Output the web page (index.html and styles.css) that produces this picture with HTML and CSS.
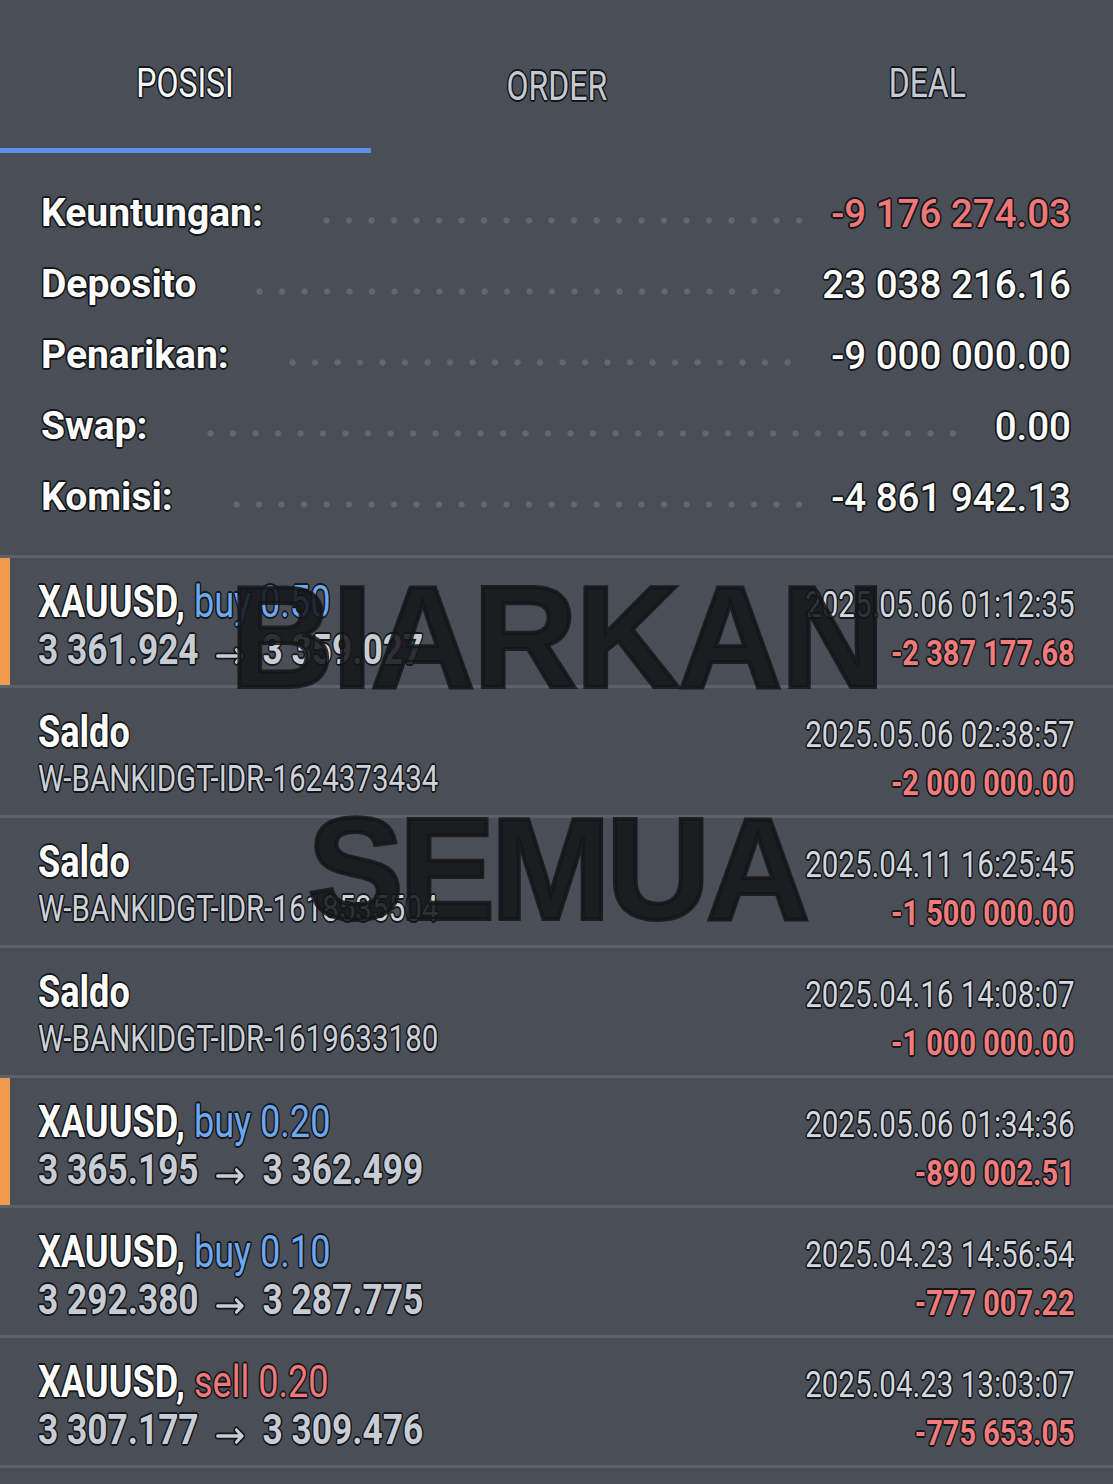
FILE: index.html
```html
<!DOCTYPE html>
<html lang="id">
<head>
<meta charset="utf-8">
<title>Riwayat</title>
<link rel="stylesheet" href="styles.css">
</head>
<body>
<div class="screen">
  <nav class="tabs">
    <div class="tab active"><span class="tab-label">POSISI</span></div>
    <div class="tab"><span class="tab-label order">ORDER</span></div>
    <div class="tab"><span class="tab-label">DEAL</span></div>
  </nav>

  <section class="summary">
    <div class="srow"><span class="label">Keuntungan:</span><span class="leader"></span><span class="val neg">-9 176 274.03</span></div>
    <div class="srow"><span class="label">Deposito</span><span class="leader"></span><span class="val">23 038 216.16</span></div>
    <div class="srow"><span class="label">Penarikan:</span><span class="leader"></span><span class="val">-9 000 000.00</span></div>
    <div class="srow"><span class="label">Swap:</span><span class="leader"></span><span class="val">0.00</span></div>
    <div class="srow"><span class="label">Komisi:</span><span class="leader"></span><span class="val">-4 861 942.13</span></div>
  </section>

  <ul class="list">
    <li class="item open">
      <div class="left"><div class="cond">
        <div class="title">XAUUSD, <span class="buy">buy 0.50</span></div>
        <div class="prices">3 361.924<svg class="arrow" viewBox="0 0 38 18" width="38" height="18"><path class="ar-bg" d="M3 9H33M26 3L33 9L26 15"/><path class="ar-fg" d="M3 9H33M26 3L33 9L26 15"/></svg>3 359.027</div>
      </div></div>
      <div class="right"><div class="cond">
        <div class="date">2025.05.06 01:12:35</div>
        <div class="amt">-2 387 177.68</div>
      </div></div>
    </li>
    <li class="item">
      <div class="left"><div class="cond">
        <div class="title">Saldo</div>
        <div class="sub">W-BANKIDGT-IDR-1624373434</div>
      </div></div>
      <div class="right"><div class="cond">
        <div class="date">2025.05.06 02:38:57</div>
        <div class="amt">-2 000 000.00</div>
      </div></div>
    </li>
    <li class="item">
      <div class="left"><div class="cond">
        <div class="title">Saldo</div>
        <div class="sub">W-BANKIDGT-IDR-1618535504</div>
      </div></div>
      <div class="right"><div class="cond">
        <div class="date">2025.04.11 16:25:45</div>
        <div class="amt">-1 500 000.00</div>
      </div></div>
    </li>
    <li class="item">
      <div class="left"><div class="cond">
        <div class="title">Saldo</div>
        <div class="sub">W-BANKIDGT-IDR-1619633180</div>
      </div></div>
      <div class="right"><div class="cond">
        <div class="date">2025.04.16 14:08:07</div>
        <div class="amt">-1 000 000.00</div>
      </div></div>
    </li>
    <li class="item open">
      <div class="left"><div class="cond">
        <div class="title">XAUUSD, <span class="buy">buy 0.20</span></div>
        <div class="prices">3 365.195<svg class="arrow" viewBox="0 0 38 18" width="38" height="18"><path class="ar-bg" d="M3 9H33M26 3L33 9L26 15"/><path class="ar-fg" d="M3 9H33M26 3L33 9L26 15"/></svg>3 362.499</div>
      </div></div>
      <div class="right"><div class="cond">
        <div class="date">2025.05.06 01:34:36</div>
        <div class="amt">-890 002.51</div>
      </div></div>
    </li>
    <li class="item">
      <div class="left"><div class="cond">
        <div class="title">XAUUSD, <span class="buy">buy 0.10</span></div>
        <div class="prices">3 292.380<svg class="arrow" viewBox="0 0 38 18" width="38" height="18"><path class="ar-bg" d="M3 9H33M26 3L33 9L26 15"/><path class="ar-fg" d="M3 9H33M26 3L33 9L26 15"/></svg>3 287.775</div>
      </div></div>
      <div class="right"><div class="cond">
        <div class="date">2025.04.23 14:56:54</div>
        <div class="amt">-777 007.22</div>
      </div></div>
    </li>
    <li class="item">
      <div class="left"><div class="cond">
        <div class="title">XAUUSD, <span class="sell">sell 0.20</span></div>
        <div class="prices">3 307.177<svg class="arrow" viewBox="0 0 38 18" width="38" height="18"><path class="ar-bg" d="M3 9H33M26 3L33 9L26 15"/><path class="ar-fg" d="M3 9H33M26 3L33 9L26 15"/></svg>3 309.476</div>
      </div></div>
      <div class="right"><div class="cond">
        <div class="date">2025.04.23 13:03:07</div>
        <div class="amt">-775 653.05</div>
      </div></div>
    </li>
  </ul>

  <div class="watermark" aria-hidden="true">
    <div class="wm wm1">BIARKAN</div>
    <div class="wm wm2">SEMUA</div>
  </div>
</div>
</body>
</html>
```
FILE: styles.css
```css
html, body {
  margin: 0;
  padding: 0;
  background: #4a4f57;
}

.screen {
  position: relative;
  width: 1113px;
  height: 1484px;
  overflow: hidden;
  background: #4a4f57;
  font-family: Roboto, "Noto Sans", "Liberation Sans", sans-serif;
  --ol: #15171a;
  text-shadow: -1.6px 0 0 var(--ol), 1.6px 0 0 var(--ol), 0 -1.6px 0 var(--ol), 0 1.6px 0 var(--ol),
               -1.2px -1.2px 0 var(--ol), 1.2px 1.2px 0 var(--ol), -1.2px 1.2px 0 var(--ol), 1.2px -1.2px 0 var(--ol);
}

/* Tabs */
.tabs {
  display: grid;
  grid-template-columns: repeat(3, 1fr);
  height: 155px;
}

.tab {
  box-sizing: border-box;
  height: 153px;
  padding-top: 60px;
  text-align: center;
}

.tab.active {
  border-bottom: 5px solid #5b90e6;
}

.tab-label {
  display: inline-block;
  font-size: 40px;
  line-height: 48px;
  font-weight: 400;
  color: #c5cad1;
  transform: scaleX(0.8);
}

.tab-label.order {
  position: relative;
  top: 3px;
}

.tab.active .tab-label {
  color: #f6f7f8;
}

/* Summary */
.summary {
  padding: 23px 42px 0 41px;
  height: 355px;
}

.srow {
  display: flex;
  height: 71px;
  align-items: flex-start;
}

.label {
  font-size: 39px;
  line-height: 71px;
  font-weight: 700;
  color: #ffffff;
  white-space: nowrap;
}

.val {
  font-size: 38.5px;
  line-height: 71px;
  font-weight: 500;
  color: #ffffff;
  white-space: nowrap;
}

.val.neg {
  color: #f07878;
}

.leader {
  flex: 1;
  height: 7px;
  margin: 39px 28px 0 60px;
  background-image: radial-gradient(circle at 3.5px 3.5px, #62686f 2.8px, transparent 3.4px);
  background-size: 22.5px 7px;
  background-repeat: repeat-x;
}

/* List */
.list {
  list-style: none;
  margin: 22px 0 0 0;
  padding: 0;
  border-top: 3px solid #5c6269;
}

.item {
  box-sizing: border-box;
  height: 130px;
  display: flex;
  justify-content: space-between;
  padding: 21px 38px 0 38px;
  border-bottom: 3px solid #5c6269;
}

.item.open {
  box-shadow: inset 10px 0 0 #f29a4e;
}

.cond {
  display: inline-block;
  white-space: nowrap;
  transform: scaleX(0.82);
}

.left .cond {
  transform-origin: left top;
}

.right {
  margin-top: 2px;
  text-align: right;
}

.right .cond {
  transform-origin: right top;
}

.title {
  font-size: 44px;
  line-height: 47px;
  font-weight: 700;
  color: #ffffff;
}

.buy {
  font-weight: 400;
  color: #6ea8f2;
}

.sell {
  font-weight: 400;
  color: #f07878;
}

.prices {
  font-size: 43px;
  line-height: 47px;
  font-weight: 700;
  color: #c8cdd5;
}

.arrow {
  display: inline-block;
  vertical-align: -1px;
  margin: 0 20px 0 20px;
  overflow: visible;
}

.ar-bg,
.ar-fg {
  fill: none;
  stroke-linecap: round;
  stroke-linejoin: round;
}

.ar-bg {
  stroke: #15171a;
  stroke-width: 7;
}

.ar-fg {
  stroke: #c8cdd5;
  stroke-width: 3.6;
}

.sub {
  font-size: 36px;
  line-height: 47px;
  font-weight: 400;
  color: #cdd1d8;
}

.date {
  font-size: 36px;
  line-height: 48px;
  font-weight: 400;
  color: #d4d8de;
}

.amt {
  font-size: 35.3px;
  line-height: 48px;
  font-weight: 700;
  color: #f27b7b;
}

/* Watermark overlay */
.watermark {
  position: absolute;
  left: 0;
  right: 0;
  top: 566px;
  text-align: center;
  pointer-events: none;
  font-family: "Liberation Sans", Arial, sans-serif;
  font-weight: 700;
  text-shadow: none;
}

.wm {
  font-size: 144px;
  line-height: 144px;
  color: rgba(20, 21, 24, 0.86);
  -webkit-text-stroke: 4px rgba(20, 21, 24, 0.86);
}

.wm1 {
  letter-spacing: -1.5px;
}

.wm2 {
  margin-top: 88px;
  letter-spacing: -4.4px;
}
```
